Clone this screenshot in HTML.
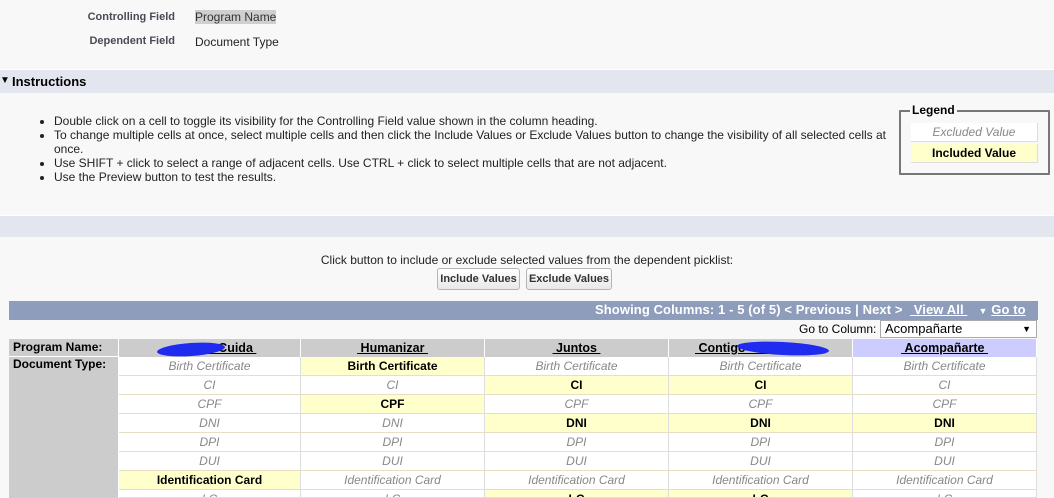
<!DOCTYPE html>
<html><head><meta charset="utf-8"><style>
*{margin:0;padding:0;box-sizing:border-box}
html{overflow:hidden;width:1054px;height:498px}
body{width:1054px;height:498px;overflow:hidden;background:#f8f8f8;font-family:"Liberation Sans",Arial,sans-serif;font-size:12px;color:#000;position:relative}
.a{position:absolute;white-space:nowrap}
.lbl{color:#4a4a56;font-size:11px;font-weight:bold;text-align:right;width:175px;left:0}
.band{position:absolute;left:0;width:1054px;background:#e3e6ef;border-top:1px solid #fff}
ul{position:absolute;left:38px;top:114px;width:860px;list-style:none;line-height:14px;font-size:12px;color:#222}
ul li{position:relative;padding-left:16px}
ul li:before{content:"";position:absolute;left:2px;top:6px;width:4px;height:4px;border-radius:50%;background:#222}
.btn{position:absolute;top:268px;height:22px;border:1px solid #b5b5b5;border-radius:3px;background:linear-gradient(#fff,#e8e8e8);font-size:11px;font-weight:bold;color:#333;text-align:center;line-height:20px}
.c{position:absolute;height:19px;border-bottom:1px solid #e6dfc4;border-right:1px solid #ddd;background:#fff;text-align:center;line-height:18px;font-size:12px;color:#888;font-style:italic;overflow:hidden}
.c.y{background:#ffffcc;color:#000;font-style:normal;font-weight:bold}
.h{position:absolute;top:339px;height:18px;background:#cccccc;text-align:center;font-weight:bold;font-size:12.5px;line-height:19px;border-right:1px solid #fff}
.h span{text-decoration:underline}
.scr{position:absolute;background:#1f2cf0;border-radius:50%}
</style></head><body>
<div class="a lbl" style="top:11px">Controlling Field</div>
<div class="a" style="left:195px;top:10px;background:#cfcfcf;color:#333">Program Name</div>
<div class="a lbl" style="top:35px">Dependent Field</div>
<div class="a" style="left:195px;top:35px;color:#222">Document Type</div>

<div class="band" style="top:69px;height:24px"></div>
<div class="a" style="left:0px;top:75px;font-size:10px">&#9660;</div>
<div class="a" style="left:12px;top:74px;font-size:13px;font-weight:bold">Instructions</div>

<ul>
<li>Double click on a cell to toggle its visibility for the Controlling Field value shown in the column heading.</li>
<li>To change multiple cells at once, select multiple cells and then click the Include Values or Exclude Values button to change the visibility of all selected cells at once.</li>
<li>Use SHIFT + click to select a range of adjacent cells. Use CTRL + click to select multiple cells that are not adjacent.</li>
<li>Use the Preview button to test the results.</li>
</ul>

<div style="position:absolute;left:899px;top:110px;width:151px;height:65px;border:2px solid #777;border-radius:1px"></div>
<div class="a" style="left:910px;top:103px;background:#f8f8f8;padding:0 2px;font-weight:bold;font-size:12px">Legend</div>
<div class="a" style="left:911px;top:123px;width:127px;height:19px;background:#fff;border-right:1px solid #ddd;border-bottom:1px solid #ddd;color:#888;font-style:italic;text-align:center;line-height:18px">Excluded Value</div>
<div class="a" style="left:911px;top:144px;width:127px;height:19px;background:#ffffcc;border-right:1px solid #ddd;border-bottom:1px solid #ddd;font-weight:bold;text-align:center;line-height:18px">Included Value</div>

<div class="band" style="top:215px;height:22px"></div>

<div class="a" style="left:0;width:1054px;text-align:center;top:253px;color:#222">Click button to include or exclude selected values from the dependent picklist:</div>
<div class="btn" style="left:437px;width:83px">Include Values</div>
<div class="btn" style="left:526px;width:86px">Exclude Values</div>

<div class="a" style="left:9px;top:301px;width:1029px;height:19px;background:#8e9dbb"></div>
<div class="a" style="left:595px;top:302px;color:#fff;font-weight:bold;font-size:13px;letter-spacing:0.1px">Showing Columns: 1 - 5 (of 5) &lt; Previous | Next &gt; &nbsp;<u>&nbsp;View All&nbsp;</u>&nbsp; &nbsp;<span style="font-size:9px">&#9660;</span> <u>Go to</u></div>
<div class="a" style="left:799px;top:322px">Go to Column:</div>
<div class="a" style="left:880px;top:320px;width:157px;height:18px;background:#fff;border:1px solid #aaa;padding-left:4px;line-height:16px;font-size:13px">Acompañarte<span style="position:absolute;right:5px;font-size:9px">&#9660;</span></div>

<div class="a" style="left:9px;top:339px;width:110px;height:159px;background:#cccccc;border-right:1px solid #fff"></div>
<div class="a" style="left:9px;top:356px;width:110px;height:1px;background:#fff"></div>
<div class="a" style="left:13px;top:340px;font-weight:bold">Program Name:</div>
<div class="a" style="left:13px;top:357px;font-weight:bold">Document Type:</div>

<div class="h" style="left:119px;width:182px"><span>&nbsp;&nbsp;&nbsp;&nbsp;&nbsp;&nbsp;&nbsp;&nbsp;&nbsp;&nbsp;&nbsp;&nbsp;&nbsp;&nbsp;&nbsp;&nbsp;Cuida&nbsp;</span></div>
<div class="scr" style="left:157px;top:343px;width:68px;height:13px;transform:rotate(-4deg)"></div>
<div class="h" style="left:301px;width:184px"><span>&nbsp;Humanizar&nbsp;</span></div>
<div class="h" style="left:485px;width:184px"><span>&nbsp;Juntos&nbsp;</span></div>
<div class="h" style="left:669px;width:184px;text-align:left;padding-left:26px"><span>&nbsp;Contigo&nbsp;&nbsp;&nbsp;&nbsp;&nbsp;&nbsp;&nbsp;&nbsp;&nbsp;&nbsp;&nbsp;&nbsp;&nbsp;&nbsp;&nbsp;&nbsp;</span></div>
<div class="scr" style="left:737px;top:342px;width:92px;height:13px;transform:rotate(3deg)"></div>
<div class="h" style="left:853px;width:184px;background:#ccccff"><span>&nbsp;Acompañarte&nbsp;</span></div>

<div class="c" style="left:119px;top:357px;width:182px">Birth Certificate</div>
<div class="c y" style="left:301px;top:357px;width:184px">Birth Certificate</div>
<div class="c" style="left:485px;top:357px;width:184px">Birth Certificate</div>
<div class="c" style="left:669px;top:357px;width:184px">Birth Certificate</div>
<div class="c" style="left:853px;top:357px;width:184px">Birth Certificate</div>

<div class="c" style="left:119px;top:376px;width:182px">CI</div>
<div class="c" style="left:301px;top:376px;width:184px">CI</div>
<div class="c y" style="left:485px;top:376px;width:184px">CI</div>
<div class="c y" style="left:669px;top:376px;width:184px">CI</div>
<div class="c" style="left:853px;top:376px;width:184px">CI</div>

<div class="c" style="left:119px;top:395px;width:182px">CPF</div>
<div class="c y" style="left:301px;top:395px;width:184px">CPF</div>
<div class="c" style="left:485px;top:395px;width:184px">CPF</div>
<div class="c" style="left:669px;top:395px;width:184px">CPF</div>
<div class="c" style="left:853px;top:395px;width:184px">CPF</div>

<div class="c" style="left:119px;top:414px;width:182px">DNI</div>
<div class="c" style="left:301px;top:414px;width:184px">DNI</div>
<div class="c y" style="left:485px;top:414px;width:184px">DNI</div>
<div class="c y" style="left:669px;top:414px;width:184px">DNI</div>
<div class="c y" style="left:853px;top:414px;width:184px">DNI</div>

<div class="c" style="left:119px;top:433px;width:182px">DPI</div>
<div class="c" style="left:301px;top:433px;width:184px">DPI</div>
<div class="c" style="left:485px;top:433px;width:184px">DPI</div>
<div class="c" style="left:669px;top:433px;width:184px">DPI</div>
<div class="c" style="left:853px;top:433px;width:184px">DPI</div>

<div class="c" style="left:119px;top:452px;width:182px">DUI</div>
<div class="c" style="left:301px;top:452px;width:184px">DUI</div>
<div class="c" style="left:485px;top:452px;width:184px">DUI</div>
<div class="c" style="left:669px;top:452px;width:184px">DUI</div>
<div class="c" style="left:853px;top:452px;width:184px">DUI</div>

<div class="c y" style="left:119px;top:471px;width:182px">Identification Card</div>
<div class="c" style="left:301px;top:471px;width:184px">Identification Card</div>
<div class="c" style="left:485px;top:471px;width:184px">Identification Card</div>
<div class="c" style="left:669px;top:471px;width:184px">Identification Card</div>
<div class="c" style="left:853px;top:471px;width:184px">Identification Card</div>

<div class="c" style="left:119px;top:490px;width:182px;height:8px">LC</div>
<div class="c" style="left:301px;top:490px;width:184px;height:8px">LC</div>
<div class="c y" style="left:485px;top:490px;width:184px;height:8px">LC</div>
<div class="c y" style="left:669px;top:490px;width:184px;height:8px">LC</div>
<div class="c" style="left:853px;top:490px;width:184px;height:8px">LC</div>
</body></html>
